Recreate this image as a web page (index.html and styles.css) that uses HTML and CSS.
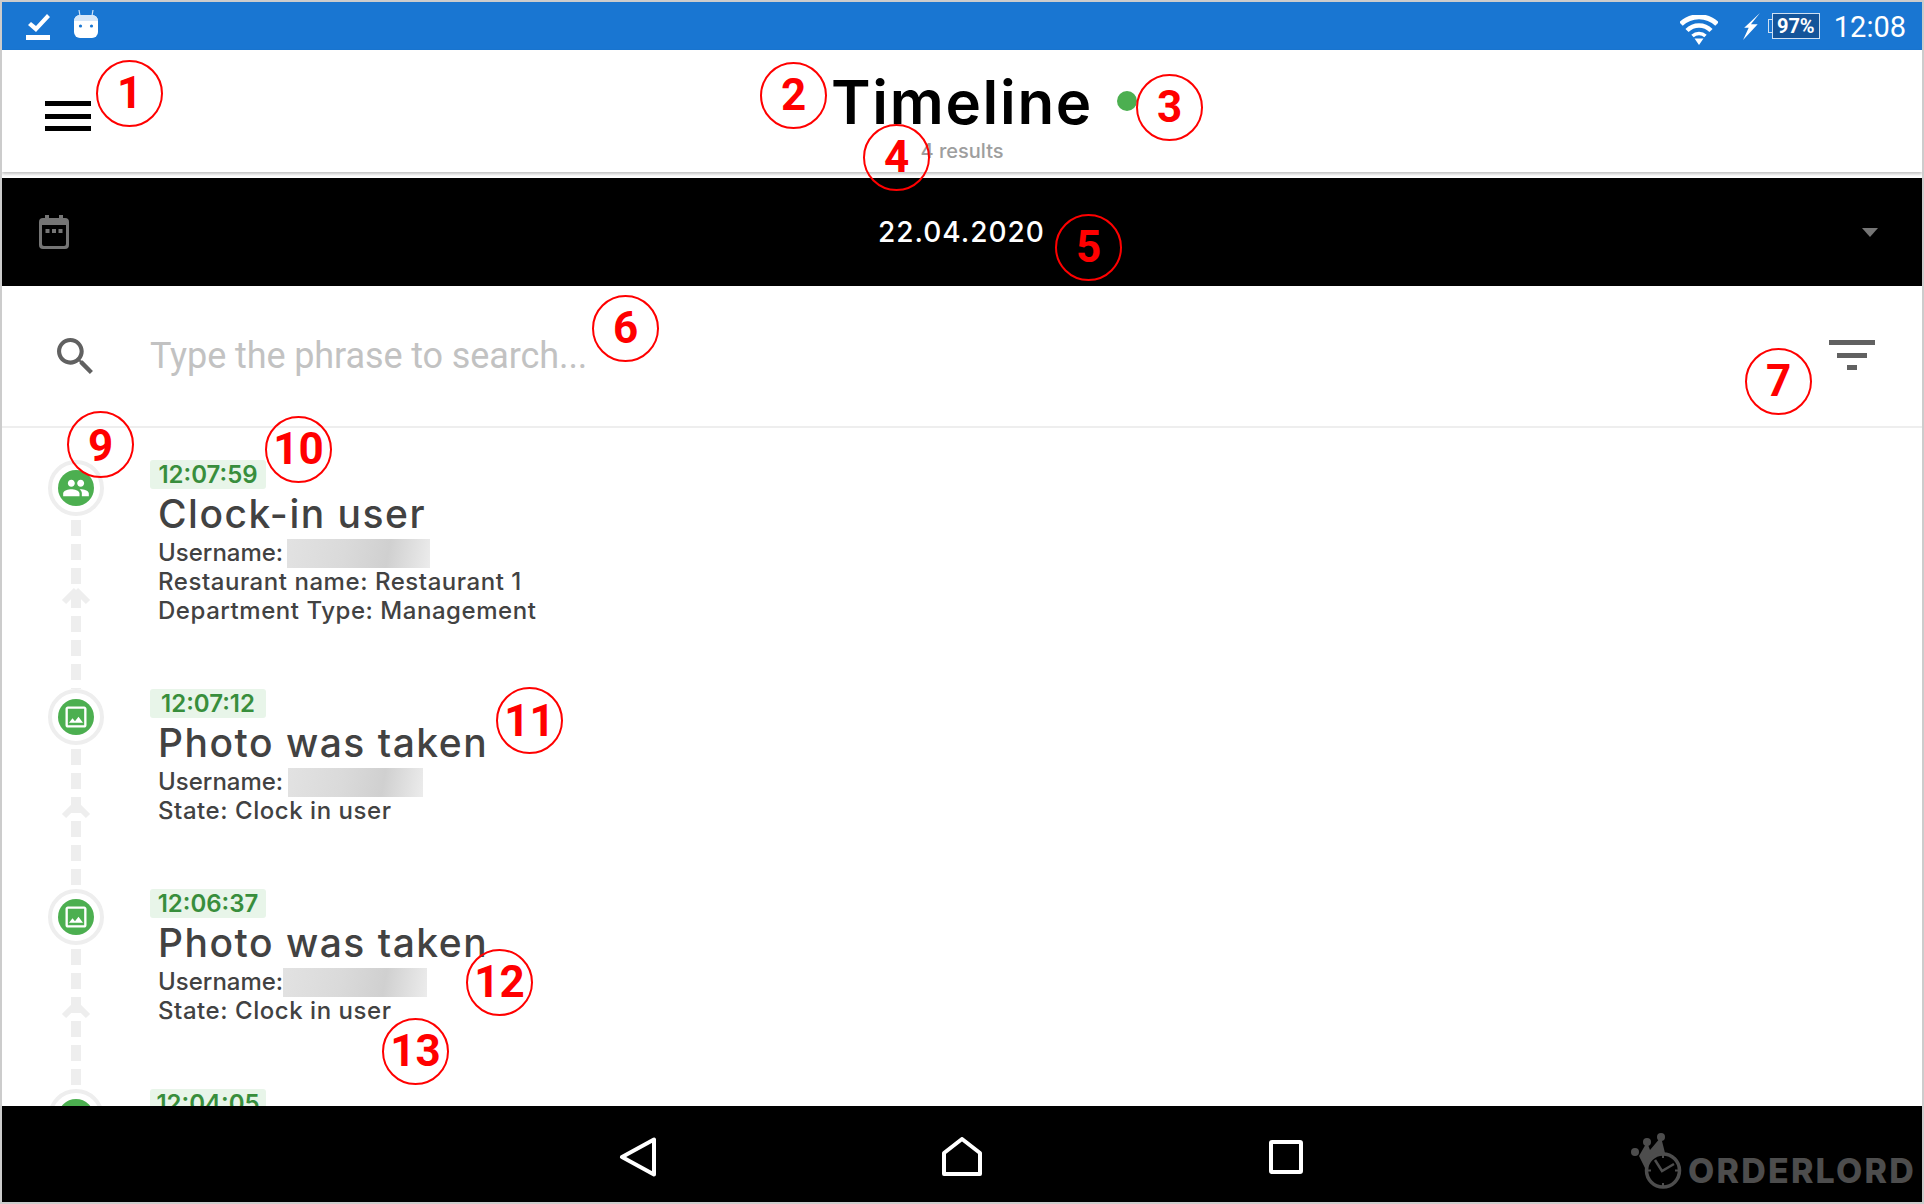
FILE: index.html
```html
<!DOCTYPE html>
<html lang="en">
  <head>
    <meta charset="UTF-8" />
    <meta name="viewport" content="width=device-width, initial-scale=1.0" />
    <title>Timeline</title>
    <link rel="stylesheet" href="styles.css">
  </head>
  <body>
    <div class="frame">
      <div class="status-bar">
        <svg class="status-check" viewBox="0 0 24 29"><path d="M2 14l3-3 5 4L21 3l3 3-14 15z" fill="#fff"/><rect y="24" width="24" height="5" fill="#fff"/></svg>
        <svg class="status-robot" viewBox="0 0 24 28"><path d="M6 6L5 0M18 6l1-6" stroke="#cfe3f7" stroke-width="1.2"/><rect y="5" width="24" height="23" rx="6" fill="#fff"/><path d="M0 11a6 6 0 0 1 6-6h12a6 6 0 0 1 6 6z" fill="#d5e6f8"/><circle cx="6.500" cy="16" r="1.600" fill="#1976d2"/><circle cx="17.500" cy="16" r="1.600" fill="#1976d2"/></svg>
        <div class="status-right">
          <svg class="status-wifi" viewBox="0 0 38 30"><path d="M1 9a26 26 0 0 1 36 0" fill="none" stroke="#fff" stroke-width="5"/><path d="M7 15.500a17 17 0 0 1 24 0" fill="none" stroke="#fff" stroke-width="4.500"/><path d="M12.500 21a9.500 9.500 0 0 1 13 0" fill="none" stroke="#fff" stroke-width="3.500"/><path d="M14.500 23.500h9L19 30z" fill="#fff"/></svg>
          <svg class="status-bolt" viewBox="0 0 15 24"><path d="M15 0L7 10h6L0 24l5-11H1z" fill="#fff"/></svg>
          <div class="battery"><span class="battery-nub"></span><span class="battery-body">97%</span></div>
          <span class="status-time">12:08</span>
        </div>
      </div>

      <div class="app-header">
        <div class="menu-button"><span></span><span></span><span></span></div>
        <div class="app-title">
          <h1>Timeline</h1>
          <div class="results">4 results</div>
        </div>
        <div class="live-cell"><span class="live-dot"></span></div>
      </div>

      <div class="date-bar">
        <svg class="date-icon" viewBox="0 0 30 34"><path d="M6 0h4v3h10V0h4v3h2a4 4 0 0 1 4 4v23a4 4 0 0 1-4 4H4a4 4 0 0 1-4-4V7a4 4 0 0 1 4-4h2z M3 10v19a2 2 0 0 0 2 2h20a2 2 0 0 0 2-2V10z" fill="#757575" fill-rule="evenodd"/><rect x="6.500" y="14" width="4" height="4" fill="#757575"/><rect x="13" y="14" width="4" height="4" fill="#757575"/><rect x="19.500" y="14" width="4" height="4" fill="#757575"/></svg>
        <span class="date-text">22.04.2020</span>
        <span class="date-caret"></span>
      </div>

      <div class="search-bar">
        <svg class="search-icon" viewBox="3 3 18 18"><path d="M15.500 14h-.79l-.28-.27C15.410 12.590 16 11.110 16 9.500 16 5.910 13.090 3 9.500 3S3 5.910 3 9.500 5.910 16 9.500 16c1.610 0 3.090-.59 4.230-1.570l.27.28v.79l5 4.990L20.490 19l-4.990-5zm-6 0C7.010 14 5 11.990 5 9.500S7.010 5 9.500 5 14 7.010 14 9.500 11.990 14 9.500 14z" fill="#616161"/></svg>
        <input class="search-input" type="text" placeholder="Type the phrase to search..." />
        <div class="filter-button"><span></span><span></span><span></span></div>
      </div>

      <div class="timeline">
        <div class="event">
          <div class="event-marker">
            <div class="ring">
              <span class="ring-dot"><svg viewBox="0 0 24 24"><path d="M16 11c1.660 0 2.990-1.340 2.990-3S17.660 5 16 5c-1.660 0-3 1.340-3 3s1.340 3 3 3zm-8 0c1.660 0 2.990-1.340 2.990-3S9.660 5 8 5C6.340 5 5 6.340 5 8s1.340 3 3 3zm0 2c-2.330 0-7 1.170-7 3.500V19h14v-2.500c0-2.330-4.670-3.500-7-3.500zm8 0c-.29 0-.62.02-.97.05 1.160.84 1.970 1.970 1.970 3.450V19h6v-2.500c0-2.330-4.670-3.500-7-3.500z" fill="#fff"/></svg></span>
            </div>
            <div class="connector"><svg class="connector-arrow" viewBox="0 0 30 20"><path d="M15 3L3 15" stroke="#eee" stroke-width="6" fill="none"/><path d="M15 3l12 12" stroke="#eee" stroke-width="6" fill="none"/></svg></div>
          </div>
          <div class="event-body">
            <span class="event-time">12:07:59</span>
            <h2 class="event-title">Clock-in user</h2>
            <div class="event-line"><span class="event-label">Username:</span><span class="blur blur-a"></span></div>
            <div class="event-line">Restaurant name: Restaurant 1</div>
            <div class="event-line">Department Type: Management</div>
          </div>
        </div>

        <div class="event">
          <div class="event-marker">
            <div class="ring">
              <span class="ring-dot"><svg viewBox="0 0 24 24"><path d="M19 5v14H5V5h14m0-2H5c-1.100 0-2 .9-2 2v14c0 1.100.9 2 2 2h14c1.100 0 2-.9 2-2V5c0-1.100-.9-2-2-2zm-4.860 8.860l-3 3.870L9 13.140 6 17h12l-3.860-5.140z" fill="#fff"/></svg></span>
            </div>
            <div class="connector"><svg class="connector-arrow" viewBox="0 0 30 20"><path d="M15 3L3 15" stroke="#eee" stroke-width="6" fill="none"/><path d="M15 3l12 12" stroke="#eee" stroke-width="6" fill="none"/></svg></div>
          </div>
          <div class="event-body">
            <span class="event-time">12:07:12</span>
            <h2 class="event-title">Photo was taken</h2>
            <div class="event-line"><span class="event-label">Username:</span><span class="blur blur-b"></span></div>
            <div class="event-line">State: Clock in user</div>
          </div>
        </div>

        <div class="event">
          <div class="event-marker">
            <div class="ring">
              <span class="ring-dot"><svg viewBox="0 0 24 24"><path d="M19 5v14H5V5h14m0-2H5c-1.100 0-2 .9-2 2v14c0 1.100.9 2 2 2h14c1.100 0 2-.9 2-2V5c0-1.100-.9-2-2-2zm-4.860 8.860l-3 3.870L9 13.140 6 17h12l-3.860-5.140z" fill="#fff"/></svg></span>
            </div>
            <div class="connector"><svg class="connector-arrow" viewBox="0 0 30 20"><path d="M15 3L3 15" stroke="#eee" stroke-width="6" fill="none"/><path d="M15 3l12 12" stroke="#eee" stroke-width="6" fill="none"/></svg></div>
          </div>
          <div class="event-body">
            <span class="event-time">12:06:37</span>
            <h2 class="event-title">Photo was taken</h2>
            <div class="event-line"><span class="event-label">Username:</span><span class="blur blur-c"></span></div>
            <div class="event-line">State: Clock in user</div>
          </div>
        </div>

        <div class="event">
          <div class="event-marker">
            <div class="ring"><span class="ring-dot"></span></div>
          </div>
          <div class="event-body">
            <span class="event-time">12:04:05</span>
          </div>
        </div>
      </div>

      <div class="nav-bar">
        <svg class="nav-icon" viewBox="0 0 40 40"><path d="M36 2.500v35L4 20z" fill="none" stroke="#fff" stroke-width="4" stroke-linejoin="round"/></svg>
        <svg class="nav-icon" viewBox="0 0 40 40"><path d="M2 37V16L20 2l18 14v21z" fill="none" stroke="#fff" stroke-width="4" stroke-linejoin="round"/></svg>
        <svg class="nav-icon" viewBox="0 0 40 40"><rect x="5" y="5" width="30" height="30" rx="1" fill="none" stroke="#fff" stroke-width="4"/></svg>
        <div class="logo">
          <svg class="logo-mark" viewBox="0 0 52 60"><circle cx="4" cy="19" r="4" fill="#4d4d4d"/><circle cx="16" cy="9" r="4" fill="#4d4d4d"/><circle cx="30" cy="4" r="4" fill="#4d4d4d"/><path d="M8 23L16 9l3 8L30 4l4 16-20 15z" fill="#4d4d4d"/><circle cx="32" cy="37.500" r="16.500" fill="#000" stroke="#4d4d4d" stroke-width="3.500"/><path d="M24 27l7 11 12-7" fill="none" stroke="#4d4d4d" stroke-width="2.500"/><path d="M32 21v4M32 50v4M16 37.500h4M44 37.500h4" stroke="#4d4d4d" stroke-width="2"/></svg>
          <span class="logo-text">ORDERLORD</span>
        </div>
      </div>
    </div>

    <div class="mark mark-1">1</div>
    <div class="mark mark-2">2</div>
    <div class="mark mark-3">3</div>
    <div class="mark mark-4">4</div>
    <div class="mark mark-5">5</div>
    <div class="mark mark-6">6</div>
    <div class="mark mark-7">7</div>
    <div class="mark mark-9">9</div>
    <div class="mark mark-10">10</div>
    <div class="mark mark-11">11</div>
    <div class="mark mark-12">12</div>
    <div class="mark mark-13">13</div>
  </body>
</html>
```

FILE: styles.css
```css
body {
  margin: 0;
  padding: 0;
  background: white;
  font-family: Inter, "Noto Sans", sans-serif;
  color: #424242;
}

.frame {
  box-sizing: border-box;
  width: 1924px;
  height: 1204px;
  border: 2px solid #ccc;
  display: flex;
  flex-direction: column;
  overflow: hidden;
}

/* status bar */
.status-bar {
  flex: none;
  height: 48px;
  background: #1976d2;
  display: flex;
  align-items: center;
  padding-left: 24px;
}

.status-check {
  width: 24px;
  height: 29px;
  margin-top: -1px;
}

.status-robot {
  width: 24px;
  height: 28px;
  margin: -4px 0 0 24px;
}

.status-right {
  margin-left: auto;
  display: flex;
  align-items: center;
}

.status-wifi {
  width: 38px;
  height: 30px;
  margin-top: 8px;
}

.status-bolt {
  width: 17px;
  height: 27px;
  margin-left: 25px;
}

.battery {
  display: flex;
  align-items: center;
  margin-left: 8px;
}

.battery-nub {
  width: 3px;
  height: 12px;
  border: 1px solid #cfe0f2;
  border-right: none;
}

.battery-body {
  box-sizing: border-box;
  width: 48px;
  height: 26px;
  background: #14549a;
  border: 1px solid #cfe0f2;
  color: white;
  font-family: Roboto, sans-serif;
  font-weight: 700;
  font-size: 20px;
  line-height: 24px;
  text-align: center;
}

.status-time {
  font-family: Roboto, sans-serif;
  font-size: 29px;
  color: white;
  margin: 0 16px 0 14px;
  padding-top: 1px;
}

/* header */
.app-header {
  flex: none;
  height: 122px;
  background: white;
  box-shadow: 0 2px 3px rgba(0, 0, 0, 0.25);
  display: grid;
  grid-template-columns: 1fr auto 1fr;
  position: relative;
}

.menu-button {
  display: flex;
  flex-direction: column;
  gap: 7.5px;
  width: 46px;
  margin: 51px 0 0 43px;
}

.menu-button span {
  display: block;
  height: 5px;
  background: black;
}

.app-title {
  text-align: center;
}

.app-title h1 {
  margin: 16px 0 0;
  font-size: 60px;
  font-weight: 600;
  line-height: 72px;
  color: black;
  letter-spacing: 1.7px;
}

.results {
  font-size: 20px;
  line-height: 24px;
  color: #9e9e9e;
  margin-top: 1px;
  font-weight: 500;
}

.live-dot {
  display: block;
  width: 20px;
  height: 20px;
  margin: 41px 0 0 24px;
  border-radius: 50%;
  background: #4caf50;
}

/* date */
.date-bar {
  flex: none;
  height: 108px;
  margin-top: 6px;
  background: black;
  display: flex;
  align-items: center;
  justify-content: space-between;
  padding: 0 44px 0 37px;
}

.date-icon {
  width: 30px;
  height: 34px;
}

.date-text {
  color: white;
  font-size: 28px;
  font-weight: 500;
  letter-spacing: 1px;
  margin-right: 8px;
}

.date-caret {
  width: 0;
  height: 0;
  border-left: 8px solid transparent;
  border-right: 8px solid transparent;
  border-top: 9px solid #757575;
}

/* search */
.search-bar {
  flex: none;
  height: 140px;
  border-bottom: 2px solid #eee;
  display: flex;
  align-items: center;
  padding: 0 47px 0 55px;
}

.search-icon {
  width: 37px;
  height: 37px;
  margin-top: 1px;
}

.search-input {
  flex: 1;
  border: none;
  outline: none;
  background: transparent;
  padding: 0;
  margin: 0 0 0 56px;
  font-family: Roboto, sans-serif;
  font-size: 36px;
  letter-spacing: -0.1px;
  color: #424242;
}

.search-input::placeholder {
  color: #c2c2c2;
  opacity: 1;
}

.filter-button {
  display: flex;
  flex-direction: column;
  align-items: center;
  gap: 7.5px;
  width: 46px;
  margin-bottom: 2px;
}

.filter-button span {
  display: block;
  height: 5px;
  background: #616161;
}

.filter-button span:nth-child(1) {
  width: 46px;
}

.filter-button span:nth-child(2) {
  width: 30px;
}

.filter-button span:nth-child(3) {
  width: 10px;
}

/* timeline */
.timeline {
  flex: 1;
  min-height: 0;
  overflow: hidden;
  padding: 32px 0 0 46px;
}

.event {
  display: flex;
}

.event-marker {
  flex: none;
  width: 56px;
  display: flex;
  flex-direction: column;
  align-items: center;
}

.ring {
  box-sizing: border-box;
  flex: none;
  width: 56px;
  height: 56px;
  border: 4px solid #eee;
  border-radius: 50%;
  display: flex;
  align-items: center;
  justify-content: center;
}

.ring-dot {
  width: 36px;
  height: 36px;
  border-radius: 50%;
  background: #4caf50;
  display: flex;
  align-items: center;
  justify-content: center;
}

.ring-dot svg {
  width: 28px;
  height: 28px;
}

.connector {
  flex: 1;
  width: 10px;
  position: relative;
  background: repeating-linear-gradient(
    to bottom,
    transparent 0,
    transparent 4px,
    #eee 4px,
    #eee 20px,
    transparent 20px,
    transparent 24px
  );
}

.connector-arrow {
  position: absolute;
  top: calc(50% - 16px);
  left: -10px;
  width: 30px;
  height: 20px;
}

.event-body {
  margin-left: 46px;
  padding-bottom: 63px;
}

.event-time {
  display: inline-block;
  vertical-align: top;
  width: 116px;
  height: 29px;
  background: #e8f5e9;
  border-radius: 3px;
  color: #388e3c;
  font-size: 24px;
  font-weight: 600;
  line-height: 30px;
  text-align: center;
}

.event-title {
  margin: 0 0 0 8px;
  font-size: 39px;
  font-weight: 500;
  line-height: 50px;
  letter-spacing: 1.5px;
  color: #424242;
}

.event-line {
  margin-left: 8px;
  font-size: 24px;
  font-weight: 500;
  line-height: 27px;
  height: 29px;
  letter-spacing: 0.55px;
  color: #424242;
}

.event-label {
  letter-spacing: 0;
}

.blur {
  display: inline-block;
  vertical-align: top;
  height: 29px;
  background: linear-gradient(100deg, #e2e2e2, #dadada 40%, #d0d0d0 70%, #ececec);
}

.blur-a {
  width: 143px;
  margin-left: 4px;
}

.blur-b {
  width: 135px;
  margin-left: 5px;
}

.blur-c {
  width: 144px;
  margin-left: 0;
}

/* nav bar */
.nav-bar {
  flex: none;
  box-sizing: border-box;
  height: 96px;
  padding-top: 6px;
  background: black;
  display: flex;
  align-items: center;
  justify-content: center;
  gap: 284px;
  position: relative;
}

.nav-icon {
  width: 40px;
  height: 40px;
}

.logo {
  position: absolute;
  left: 1629px;
  top: 27px;
  display: flex;
  align-items: flex-end;
}

.logo-mark {
  width: 52px;
  height: 60px;
}

.logo-text {
  margin: 0 0 2px 5px;
  font-size: 34px;
  font-weight: 800;
  line-height: 40px;
  letter-spacing: 2.2px;
  color: #4d4d4d;
}

/* numbered callouts drawn over the screenshot */
.mark {
  box-sizing: border-box;
  position: absolute;
  width: 67px;
  height: 67px;
  border: 2px solid #f00;
  border-radius: 50%;
  color: #f00;
  font-family: Roboto, sans-serif;
  font-weight: 700;
  font-size: 44px;
  line-height: 63px;
  text-align: center;
}

.mark-1 { left: 96px; top: 60px; }
.mark-2 { left: 760px; top: 62px; }
.mark-3 { left: 1136px; top: 74px; }
.mark-4 { left: 863px; top: 124px; }
.mark-5 { left: 1055px; top: 214px; }
.mark-6 { left: 592px; top: 295px; }
.mark-7 { left: 1745px; top: 348px; }
.mark-9 { left: 67px; top: 411px; line-height: 66px; }
.mark-10 { left: 265px; top: 416px; }
.mark-11 { left: 496px; top: 687px; line-height: 65px; }
.mark-12 { left: 466px; top: 949px; }
.mark-13 { left: 382px; top: 1018px; }
```
